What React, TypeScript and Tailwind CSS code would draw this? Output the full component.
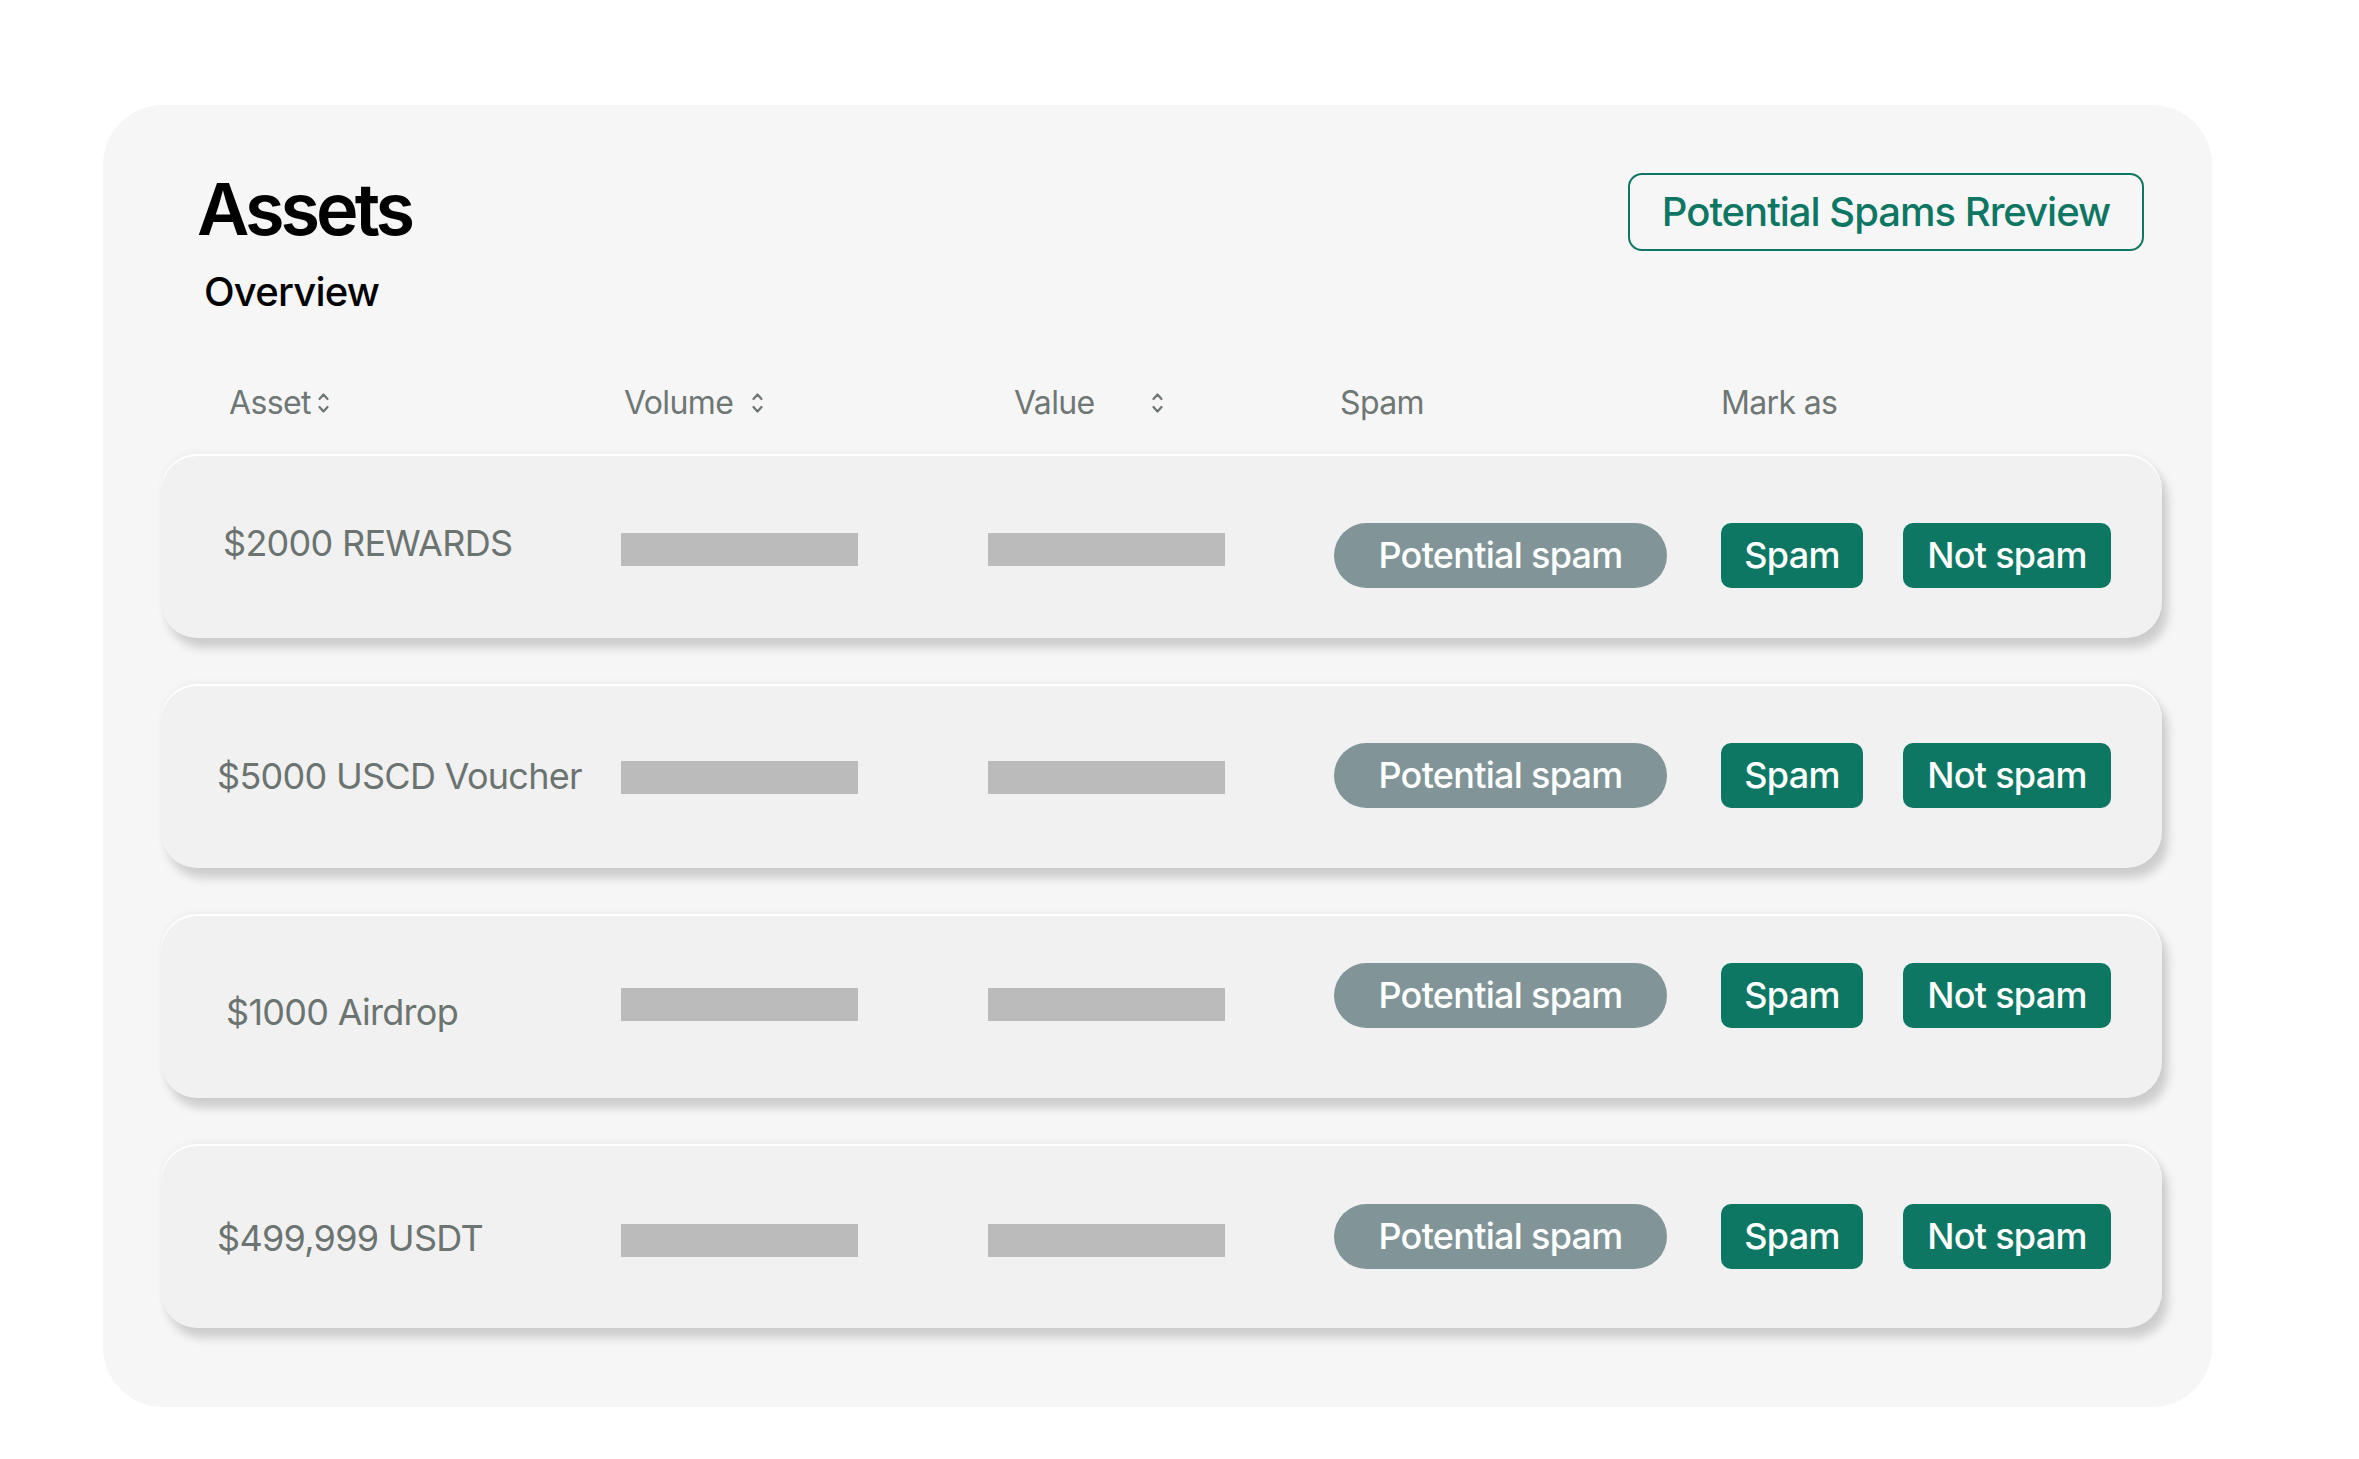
import React from "react";

const SortIcon = () => (
  <svg width="13" height="24" viewBox="0 0 13 24" fill="none" stroke="#6f7775" strokeWidth="2.3" strokeLinecap="round" strokeLinejoin="round">
    <path d="M2.5 8 L6.5 3.5 L10.5 8" />
    <path d="M2.5 16 L6.5 20.5 L10.5 16" />
  </svg>
);

const rows = [
  { name: "$2000 REWARDS", pl: "pl-[62px]", text: "mb-[6px]", bars: "mt-[6px]", btn: "mt-[18px]" },
  { name: "$5000 USCD Voucher", pl: "pl-[56px]", text: "", bars: "mt-[2px]", btn: "mb-[2px]" },
  { name: "$1000 Airdrop", pl: "pl-[65px]", text: "mt-[12px]", bars: "mb-[4px]", btn: "mb-[22px]" },
  { name: "$499,999 USDT", pl: "pl-[56px]", text: "mt-[4px]", bars: "mt-[8px]", btn: "" },
];

export default function App() {
  return (
    <div className="w-full h-[1459px] bg-white overflow-hidden" style={{ fontFamily: "Inter, 'Noto Sans', sans-serif" }}>
      <div className="ml-[103px] mt-[105px] w-[2109px] h-[1302px] bg-[#f6f6f6] rounded-[60px] pt-[68px]">
        <div className="flex justify-between pl-[94px] pr-[68px]">
          <div className="flex flex-col">
            <div className="text-[72px] leading-none font-semibold text-black tracking-[-0.055em]">Assets</div>
            <div className="mt-[27px] ml-[7px] text-[40px] leading-none font-medium text-black tracking-[-0.02em]">Overview</div>
          </div>
          <div className="h-[78px] w-[516px] border-2 border-[#0e7764] rounded-[14px] flex items-center justify-center text-[40px] font-medium text-[#0e7764] tracking-[-0.025em]">
            Potential Spams Rreview
          </div>
        </div>
        <div className="mt-[66px] h-[50px] flex items-center text-[32px] text-[#6f7775] tracking-[-0.02em]">
          <div className="ml-[126px] w-[395px] flex items-center gap-[6px]">
            <span>Asset</span>
            <SortIcon />
          </div>
          <div className="w-[390px] flex items-center gap-[18px]">
            <span>Volume</span>
            <SortIcon />
          </div>
          <div className="w-[326px] flex items-center gap-[56px]">
            <span>Value</span>
            <SortIcon />
          </div>
          <div className="w-[381px]">Spam</div>
          <div>Mark as</div>
        </div>
        <div className="mt-[26px] ml-[58px] w-[2001px] flex flex-col gap-[46px]">
          {rows.map((r) => (
            <div
              key={r.name}
              className="h-[184px] bg-[#f1f1f1] rounded-[36px] flex items-center shadow-[inset_0_2px_0_#ffffff,6px_10px_10px_rgba(0,0,0,0.17),0_-3px_6px_rgba(0,0,0,0.03)]"
            >
              <div className={`w-[460px] ${r.pl} ${r.text} text-[36px] text-[#6b7470] tracking-[-0.02em] whitespace-nowrap`}>{r.name}</div>
              <div className={`w-[237px] h-[33px] bg-[#bbbbbb] ${r.bars}`} />
              <div className={`ml-[130px] w-[237px] h-[33px] bg-[#bbbbbb] ${r.bars}`} />
              <div className={`ml-[109px] w-[333px] h-[65px] rounded-full bg-[#819599] flex items-center justify-center text-[36px] font-medium text-white tracking-[-0.02em] ${r.btn}`}>
                Potential spam
              </div>
              <div className={`ml-[54px] w-[142px] h-[65px] rounded-[10px] bg-[#0e7764] flex items-center justify-center text-[36px] font-medium text-white tracking-[-0.02em] ${r.btn}`}>
                Spam
              </div>
              <div className={`ml-[40px] w-[208px] h-[65px] rounded-[10px] bg-[#0e7764] flex items-center justify-center text-[36px] font-medium text-white tracking-[-0.02em] ${r.btn}`}>
                Not spam
              </div>
            </div>
          ))}
        </div>
      </div>
    </div>
  );
}
